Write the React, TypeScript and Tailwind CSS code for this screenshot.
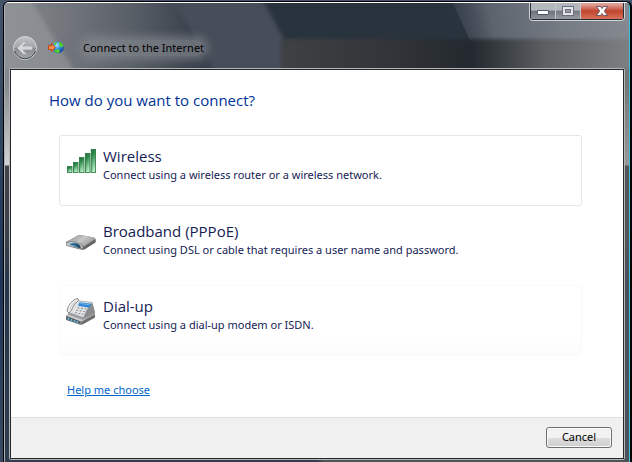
import React, { useState } from 'react';

interface ConnectionOption {
  id: string;
  title: string;
  description: string;
  icon: React.ReactNode;
}

// Blurred desktop showing through the glass title bar
const GlassBackdrop = () => (
  <svg
    aria-hidden="true"
    viewBox="0 0 626 66"
    preserveAspectRatio="none"
    className="absolute inset-0 h-full w-full"
  >
    <defs>
      <linearGradient id="glassBase" x1="0" y1="0" x2="1" y2="0">
        <stop offset="0" stopColor="#84878c" />
        <stop offset="0.1" stopColor="#72767c" />
        <stop offset="0.2" stopColor="#5a6068" />
        <stop offset="0.3" stopColor="#3b424d" />
        <stop offset="0.38" stopColor="#3b434e" />
        <stop offset="0.68" stopColor="#28323d" />
        <stop offset="1" stopColor="#28323d" />
      </linearGradient>
      <linearGradient id="glassRight" gradientUnits="userSpaceOnUse" x1="440" y1="20" x2="626" y2="-20">
        <stop offset="0" stopColor="#535b65" stopOpacity="0" />
        <stop offset="0.25" stopColor="#5b636d" />
        <stop offset="0.6" stopColor="#767c84" />
        <stop offset="1" stopColor="#868b91" />
      </linearGradient>
      <linearGradient id="glassSlab" gradientUnits="userSpaceOnUse" x1="274" y1="0" x2="626" y2="0">
        <stop offset="0" stopColor="#3e4042" stopOpacity="0" />
        <stop offset="0.03" stopColor="#3e4042" />
        <stop offset="0.3" stopColor="#323539" />
        <stop offset="0.55" stopColor="#24292f" />
        <stop offset="0.64" stopColor="#3a3f44" />
        <stop offset="0.76" stopColor="#5d5f62" />
        <stop offset="1" stopColor="#7d7f82" />
      </linearGradient>
      <filter id="soft" colorInterpolationFilters="sRGB" x="-10%" y="-20%" width="120%" height="140%">
        <feGaussianBlur stdDeviation="2" />
      </filter>
    </defs>
    <rect width="626" height="66" fill="url(#glassBase)" />
    <path d="M-10-10H22L74 77H-10Z" fill="#94979b" opacity="0.65" filter="url(#soft)" />
    <path d="M164-10H256L280 34V77H216Z" fill="#464e59" filter="url(#soft)" />
    <path d="M256-10H470V38H281Z" fill="#29333e" filter="url(#soft)" />
    <path d="M440-20H660V46H470Z" fill="url(#glassRight)" />
    <path d="M274 35H626V66H274Z" fill="url(#glassSlab)" opacity="0.4" />
    <path d="M274 37H626V66H274Z" fill="url(#glassSlab)" opacity="0.6" />
    <path d="M274 39H626V66H274Z" fill="url(#glassSlab)" />
  </svg>
);

const ArrowGlobeIcon = () => (
  <svg aria-hidden="true" viewBox="0 0 16 14" className="h-[14px] w-4">
    <defs>
      <radialGradient id="globe" cx="0.4" cy="0.3" r="0.7">
        <stop offset="0" stopColor="#a8e4ff" />
        <stop offset="0.5" stopColor="#2f8be0" />
        <stop offset="1" stopColor="#123f92" />
      </radialGradient>
    </defs>
    <circle cx="10" cy="6.5" r="5.8" fill="url(#globe)" />
    <path d="M11 1c2 .2 4 2 4.6 4.2L13 6.5 11.3 4.5ZM7 9l3-1 2 2-1.5 2.2C8.5 12 6.5 11 5.5 9.8ZM6 2.5 9 1 8 3.5 6 4.5Z" fill="#4fd02e" />
    <path d="M.5 4.5H3.5V2.5L7.5 6.5 3.5 10.5V8.5H.5Z" fill="#f58a48" stroke="#b53a0c" strokeWidth="0.8" />
  </svg>
);

const SignalIcon = () => (
  <svg aria-hidden="true" viewBox="0 0 30 26" className="h-[26px] w-[30px]">
    <defs>
      <linearGradient id="bar" x1="0" y1="0" x2="0.4" y2="1">
        <stop offset="0" stopColor="#1c6b35" />
        <stop offset="0.35" stopColor="#2f8a4b" />
        <stop offset="1" stopColor="#b5edc6" />
      </linearGradient>
    </defs>
    <g fill="url(#bar)" stroke="#26753e" strokeWidth="0.8">
      <rect x="1.4" y="18.5" width="4.6" height="6" />
      <rect x="7.4" y="14.5" width="4.6" height="10" />
      <rect x="13.4" y="9.5" width="4.6" height="15" />
      <rect x="19.4" y="5.5" width="4.6" height="19" />
      <rect x="25.2" y="1.5" width="4.4" height="23" />
    </g>
  </svg>
);

const ModemIcon = () => (
  <svg aria-hidden="true" viewBox="0 0 30 28" className="h-7 w-[30px]">
    <defs>
      <linearGradient id="modemTop" x1="0" y1="0" x2="1" y2="0.5">
        <stop offset="0" stopColor="#8e8e8e" />
        <stop offset="0.6" stopColor="#c6c6c5" />
        <stop offset="1" stopColor="#9c9c9c" />
      </linearGradient>
      <linearGradient id="modemFront" x1="0" y1="0" x2="1" y2="0">
        <stop offset="0" stopColor="#8fcbe6" />
        <stop offset="0.5" stopColor="#3a84ad" />
        <stop offset="1" stopColor="#20384a" />
      </linearGradient>
    </defs>
    <path d="M0 20 12 13.5Q14 13 16 13.3L28 15.5Q29.5 16 29.5 17V20.5L18.5 27.5Q17 28 15 27.7L1 24Q0 23.5 0 22.5Z" fill="#777" />
    <path d="M0 20.5 11.5 13.5Q14 13 16 13.2L28 15.5Q29.5 16 29 17L18 24.5Q14.5 20.5 10 19.5 5 18.5 0 20.5Z" fill="url(#modemTop)" />
    <path d="M0 21.5Q5 18.8 10 20 14.5 21 17 25.5L14 26.5 1 23.3Z" fill="#c9cbcd" />
    <path d="M2.5 22.8Q5.5 19.8 10 20.8 14 21.8 15 25.7L12.5 26Z" fill="url(#modemFront)" />
    <path d="M4.5 22.3Q10 21 13.5 25" fill="none" stroke="#2b3e4c" strokeWidth="0.8" />
    <path d="M18 24.8 29.5 17.3V20.3L18 27.3Z" fill="#666" />
  </svg>
);

const PhoneIcon = () => (
  <svg aria-hidden="true" viewBox="0 0 30 28" className="h-7 w-[30px]">
    <path d="M0 18.5 7 15 29 17V20.5L16.5 27.5Q15 28 13.5 27.5L0 23Z" fill="#7c7c7c" />
    <path d="M0 18.5 7 15 29 17 16.5 24Q15 24.7 13.5 24Z" fill="#cbcccd" />
    <path d="M.8 19.8 13.5 24.3V26.8L.8 22.6Z" fill="#46535c" />
    <path d="M2.5 20.8v2M5.5 21.9v2M8.5 23v2M11.3 24v2" stroke="#69c3ef" strokeWidth="1.5" />
    <path d="M16.5 24.5 29 17.5V20.3L16.5 27.3Z" fill="#6d6d6d" />
    <path d="M3 14 10 3.5 26 6 29 15.5V17.5L17 23 2 17.5Z" fill="#9c9ea0" />
    <path d="M2 15.5 10 3.5 26.5 5.5 21 13 17.5 20.5Z" fill="#e2e3e4" stroke="#8d8f91" strokeWidth="0.6" />
    <path d="M26.5 6 29 15.5 17.5 21 21 13.5Z" fill="#898b8e" />
    <path d="M13.5 5.3 25.5 6.8 23 10.7 12 8.8Z" fill="#2f86d4" />
    <path d="M14.5 6.5 23.5 7.7" stroke="#89c7f5" strokeWidth="0.8" />
    <path d="M11.5 10.8h2M15 11.4h2M18.5 12h2M10.2 13.3h2M13.7 13.9h2M17.2 14.5h2M8.9 15.8h2M12.4 16.5h2M15.9 17.2h1.5" stroke="#94979b" strokeWidth="1.2" />
    <path d="M1 14Q1.5 9.5 5 5.5 8.5 1.5 12 1.5L12.5 3.5 10.5 5Q7 8.5 5.5 13L3 16Z" fill="#f4f4f4" stroke="#6f7173" strokeWidth="0.8" />
    <path d="M3.5 13Q5 8 9.5 4" fill="none" stroke="#c3c5c7" strokeWidth="1" />
  </svg>
);

const options: ConnectionOption[] = [
  {
    id: 'wireless',
    title: 'Wireless',
    description: 'Connect using a wireless router or a wireless network.',
    icon: <SignalIcon />,
  },
  {
    id: 'broadband',
    title: 'Broadband (PPPoE)',
    description: 'Connect using DSL or cable that requires a user name and password.',
    icon: <ModemIcon />,
  },
  {
    id: 'dialup',
    title: 'Dial-up',
    description: 'Connect using a dial-up modem or ISDN.',
    icon: <PhoneIcon />,
  },
];

const CaptionButtons = () => (
  <div className="flex h-[18px] overflow-hidden rounded-b-[4px] border border-t-0 border-[#d0d3d6] bg-[#272d34] p-px pt-0">
    <button
      aria-label="Minimize"
      className="flex w-[25px] items-center justify-center border-r border-[#c5c8cc] bg-linear-to-b from-[#b4b7bb] from-45% via-[#6d737b] via-50% to-[#8e9399]"
    >
      <svg viewBox="0 0 12 6" className="mt-1 h-[6px] w-3">
        <rect x="0.5" y="0.5" width="11" height="4" rx="0.5" fill="#fff" stroke="#50566a" />
      </svg>
    </button>
    <button
      aria-label="Maximize"
      className="flex w-[25px] items-center justify-center border-r border-[#c5c8cc] bg-linear-to-b from-[#b4b7bb] from-45% via-[#747a81] via-50% to-[#969ba0]"
    >
      <svg viewBox="0 0 12 10" className="h-[10px] w-3">
        <rect x="0.5" y="0.5" width="11" height="9" fill="#e4e5e8" stroke="#6b707c" />
        <rect x="3.5" y="3.5" width="5" height="3" fill="#989ca3" stroke="#6b707c" />
      </svg>
    </button>
    <button
      aria-label="Close"
      className="flex w-[42px] items-center justify-center bg-linear-to-b from-[#dc9f95] from-10% via-[#c1452e] via-50% to-[#d8705a]"
    >
      <svg viewBox="0 0 12 10" className="h-[10px] w-3">
        <path d="M.5 .5h4L6 2.5 7.5.5H11.5L8.3 5l3.2 4.5H7.5L6 7.5 4.5 9.5H.5L3.7 5Z" fill="#fff" stroke="#56445a" strokeWidth="0.8" />
      </svg>
    </button>
  </div>
);

const App = () => {
  const [selected, setSelected] = useState<string>('wireless');

  return (
    <div className="flex min-h-screen flex-col bg-linear-to-b from-[#45546b] via-[#1d3458] via-60% to-[#3a4a62] pt-px pl-[3px] font-['Noto_Sans',sans-serif]">
      <div className="flex flex-1 flex-col rounded-t-[6px] border border-r-2 border-b-0 border-black bg-[#34393f]">
        <div className="flex flex-1 flex-col rounded-t-[5px] border border-b-0 border-t-white border-r-[#35c4dc] border-l-[#a9b0b6] bg-[linear-gradient(to_right,transparent_50%,#66666688_51%),linear-gradient(to_bottom,#85888c_0,#85888c_80px,#d0d1d3_162px,#41444a_163px,#3c4048_235px,#26354b_280px,#303d4e_100%)]">
          <header className="relative overflow-hidden rounded-t-[4px]">
            <GlassBackdrop />
            <div className="relative flex justify-end pr-1">
              <CaptionButtons />
            </div>
            <div className="relative flex h-[47px] items-center pt-[7px] pl-2">
              <button aria-label="Back" className="h-6 w-6">
                <svg viewBox="0 0 24 24" className="h-6 w-6">
                  <defs>
                    <linearGradient id="back" x1="0" y1="0" x2="0" y2="1">
                      <stop offset="0" stopColor="#c2c5c8" />
                      <stop offset="0.48" stopColor="#a1a4a8" />
                      <stop offset="0.52" stopColor="#868a90" />
                      <stop offset="1" stopColor="#a6a9ae" />
                    </linearGradient>
                  </defs>
                  <circle cx="12" cy="12" r="11.5" fill="url(#back)" stroke="#d2d5d8" />
                  <path d="M1.5 15A11 11 0 0 0 22.5 15" fill="none" stroke="#3d444d" strokeWidth="1" />
                  <path d="M4 12 10.5 5.5h3.5L10 10H19.5V14H10L14 18.5H10.5Z" fill="#d4d6d8" stroke="#999da2" strokeWidth="0.7" />
                </svg>
              </button>
              <div className="ml-[11px]">
                <ArrowGlobeIcon />
              </div>
              <h1 className="ml-[19px] rounded-lg bg-[#888c92]/60 text-[11px] leading-4 text-black shadow-[0_0_8px_4px_#888c9299]">
                Connect to the Internet
              </h1>
            </div>
          </header>

          <div className="mx-1 mb-[2px] flex flex-1 flex-col rounded-[2px] border border-[#b4b6b8]">
            <div className="flex flex-1 flex-col border border-[#24272b] bg-white">
              <main className="flex-1 pt-[19px] pr-[41px] pl-[38px]">
                <h2 className="font-['Open_Sans',sans-serif] text-[15px] leading-[22px] text-[#003399]">
                  How do you want to connect?
                </h2>
                <div className="mt-6 flex flex-col gap-1 pl-[10px]">
                  {options.map((option) => (
                    <button
                      key={option.id}
                      onClick={() => setSelected(option.id)}
                      className={`flex h-[71px] items-start rounded-[3px] border pt-[10px] pl-[6px] text-left text-[#151c55] ${
                        selected === option.id
                          ? 'border-[#e2e8ea]'
                          : option.id === 'dialup'
                          ? 'border-[#fafafa] bg-linear-to-b from-white from-70% to-[#fcfcfc]'
                          : 'border-transparent'
                      }`}
                    >
                      <span className="flex h-[30px] w-[30px] shrink-0 items-center justify-center">
                        {option.icon}
                      </span>
                      <span className="ml-[7px] flex flex-col">
                        <span className="font-['Open_Sans',sans-serif] text-[15px] leading-5">{option.title}</span>
                        <span className="text-[11px] leading-[18px]">{option.description}</span>
                      </span>
                    </button>
                  ))}
                </div>
                <a
                  href="#help"
                  className="mt-[26px] ml-[18px] inline-block text-[11px] leading-4 text-[#0066cc] underline"
                >
                  Help me choose
                </a>
              </main>
              <footer className="flex justify-end border-t border-[#dfdfdf] bg-[#f0f0f0] pt-[9px] pr-[11px] pb-[10px]">
                <button className="flex h-[21px] w-[66px] items-center justify-center rounded-[3px] border border-[#707070] bg-linear-to-b from-[#f2f2f2] from-50% via-[#dddddd] via-50% to-[#cfcfcf] text-[11px] text-black shadow-[inset_0_0_0_1px_#fafafa]">
                  Cancel
                </button>
              </footer>
            </div>
          </div>
        </div>
      </div>
    </div>
  );
};

export default App;
